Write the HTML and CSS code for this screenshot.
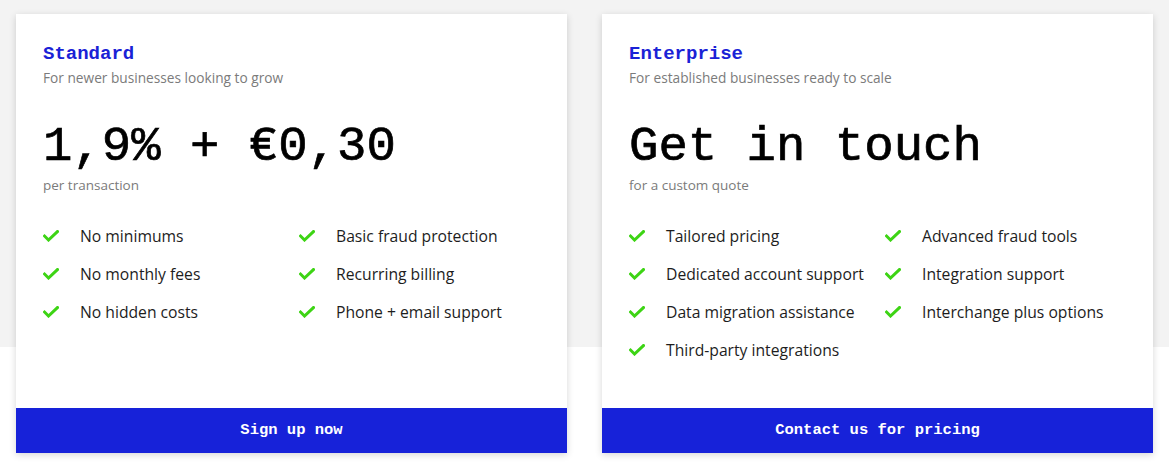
FILE: index.html
```html
<!DOCTYPE html>
<html lang="en">
<head>
<meta charset="utf-8">
<title>Pricing</title>
<link rel="stylesheet" href="styles.css">
</head>
<body>
<section class="pricing">
  <div class="card">
    <div class="card-body">
      <h2 class="plan">Standard</h2>
      <p class="tagline">For newer businesses looking to grow</p>
      <div class="price">1,9% + €0,30</div>
      <p class="unit">per transaction</p>
      <ul class="features">
        <li><svg class="check" viewBox="0 0 16 12"><polyline points="1.5,6 5.5,10 14.5,1.5"/></svg>No minimums</li>
        <li><svg class="check" viewBox="0 0 16 12"><polyline points="1.5,6 5.5,10 14.5,1.5"/></svg>Basic fraud protection</li>
        <li><svg class="check" viewBox="0 0 16 12"><polyline points="1.5,6 5.5,10 14.5,1.5"/></svg>No monthly fees</li>
        <li><svg class="check" viewBox="0 0 16 12"><polyline points="1.5,6 5.5,10 14.5,1.5"/></svg>Recurring billing</li>
        <li><svg class="check" viewBox="0 0 16 12"><polyline points="1.5,6 5.5,10 14.5,1.5"/></svg>No hidden costs</li>
        <li><svg class="check" viewBox="0 0 16 12"><polyline points="1.5,6 5.5,10 14.5,1.5"/></svg>Phone + email support</li>
      </ul>
    </div>
    <a class="cta" href="#">Sign up now</a>
  </div>
  <div class="card">
    <div class="card-body">
      <h2 class="plan">Enterprise</h2>
      <p class="tagline">For established businesses ready to scale</p>
      <div class="price">Get in touch</div>
      <p class="unit">for a custom quote</p>
      <ul class="features">
        <li><svg class="check" viewBox="0 0 16 12"><polyline points="1.5,6 5.5,10 14.5,1.5"/></svg>Tailored pricing</li>
        <li><svg class="check" viewBox="0 0 16 12"><polyline points="1.5,6 5.5,10 14.5,1.5"/></svg>Advanced fraud tools</li>
        <li><svg class="check" viewBox="0 0 16 12"><polyline points="1.5,6 5.5,10 14.5,1.5"/></svg>Dedicated account support</li>
        <li><svg class="check" viewBox="0 0 16 12"><polyline points="1.5,6 5.5,10 14.5,1.5"/></svg>Integration support</li>
        <li><svg class="check" viewBox="0 0 16 12"><polyline points="1.5,6 5.5,10 14.5,1.5"/></svg>Data migration assistance</li>
        <li><svg class="check" viewBox="0 0 16 12"><polyline points="1.5,6 5.5,10 14.5,1.5"/></svg>Interchange plus options</li>
        <li><svg class="check" viewBox="0 0 16 12"><polyline points="1.5,6 5.5,10 14.5,1.5"/></svg>Third-party integrations</li>
      </ul>
    </div>
    <a class="cta" href="#">Contact us for pricing</a>
  </div>
</section>
</body>
</html>
```

FILE: styles.css
```css
* { box-sizing: border-box; }

html, body {
  margin: 0;
  padding: 0;
  background: #ffffff;
}

body {
  font-family: "Open Sans", "Noto Sans", sans-serif;
  color: #1d1d1d;
}

.pricing {
  display: flex;
  gap: 35px;
  padding: 14px 16px 16px;
  background: linear-gradient(to bottom, #f3f3f3 0, #f3f3f3 347px, #ffffff 347px);
}

.card {
  width: 551px;
  display: flex;
  flex-direction: column;
  background: #ffffff;
  box-shadow: 0 2px 7px rgba(0, 0, 0, 0.16);
}

.card-body {
  flex: 1;
  padding: 29px 27px 39px;
}

.plan {
  margin: 0;
  font-family: "Liberation Mono", "Courier New", monospace;
  font-weight: 700;
  font-size: 19px;
  line-height: 22px;
  color: #1a22d6;
}

.tagline {
  margin: 5px 0 0;
  font-size: 13.7px;
  line-height: 16px;
  color: #7b7b7b;
}

.price {
  margin-top: 33px;
  font-family: "Liberation Mono", "Courier New", monospace;
  font-size: 49px;
  line-height: 56px;
  color: #000000;
  -webkit-text-stroke: 0.7px #000000;
}

.unit {
  margin: 1px 0 0;
  font-size: 13.5px;
  line-height: 18px;
  color: #7b7b7b;
}

.features {
  list-style: none;
  margin: 23px 0 0;
  padding: 0;
  display: grid;
  grid-template-columns: 256px 1fr;
}

.features li {
  display: flex;
  align-items: center;
  height: 38px;
  font-size: 15.7px;
  color: #1d1d1d;
  white-space: nowrap;
}

.check {
  width: 16px;
  height: 12px;
  margin-right: 21px;
  flex: none;
}

.check polyline {
  fill: none;
  stroke: #3dd414;
  stroke-width: 3;
  stroke-linecap: square;
  stroke-linejoin: miter;
}

.cta {
  display: block;
  height: 45px;
  line-height: 45px;
  text-align: center;
  background: #1722d9;
  color: #ffffff;
  text-decoration: none;
  font-family: "Liberation Mono", "Courier New", monospace;
  font-weight: 700;
  font-size: 15.5px;
}
```
